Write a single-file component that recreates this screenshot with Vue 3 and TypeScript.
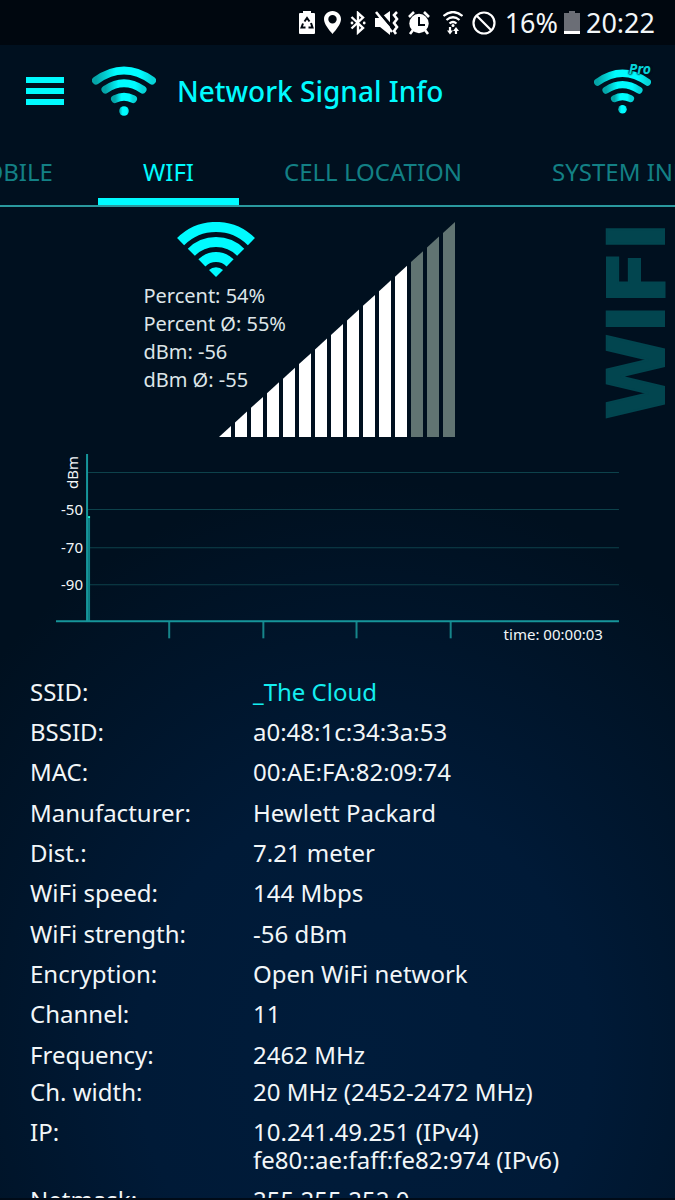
<script setup lang="ts">
import { ref } from 'vue'

interface Detail {
  label: string
  lines: string[]
  accent?: boolean
  tight?: boolean
}

const tabs = ['MOBILE', 'WIFI', 'CELL LOCATION', 'SYSTEM INFO']
const activeTab = ref('WIFI')

const readings = ['Percent: 54%', 'Percent Ø: 55%', 'dBm: -56', 'dBm Ø: -55']

const details: Detail[] = [
  { label: 'SSID:', lines: ['_The Cloud'], accent: true },
  { label: 'BSSID:', lines: ['a0:48:1c:34:3a:53'] },
  { label: 'MAC:', lines: ['00:AE:FA:82:09:74'] },
  { label: 'Manufacturer:', lines: ['Hewlett Packard'] },
  { label: 'Dist.:', lines: ['7.21 meter'] },
  { label: 'WiFi speed:', lines: ['144 Mbps'] },
  { label: 'WiFi strength:', lines: ['-56 dBm'] },
  { label: 'Encryption:', lines: ['Open WiFi network'] },
  { label: 'Channel:', lines: ['11'] },
  { label: 'Frequency:', lines: ['2462 MHz'] },
  { label: 'Ch. width:', lines: ['20 MHz (2452-2472 MHz)'], tight: true },
  { label: 'IP:', lines: ['10.241.49.251 (IPv4)', 'fe80::ae:faff:fe82:974 (IPv6)'] },
  { label: 'Netmask:', lines: ['255.255.252.0'] },
]

// Signal wedge: 12px bars with slanted tops, one every 16px
const barCount = 15
const litBars = 12
const bars = Array.from({ length: barCount }, (_, i) => {
  const left = i * 16
  const right = left + 12
  const slope = 215 / 236
  const base = 215
  return {
    points: `${left},${base} ${left},${base - left * slope} ${right},${base - right * slope} ${right},${base}`,
    lit: i < litBars,
  }
})

const gridLines = [
  { y: 19, label: '' },
  { y: 56, label: '-50' },
  { y: 94, label: '-70' },
  { y: 131, label: '-90' },
]
const ticks = [113, 207, 300, 394]
</script>

<template>
  <div class="screen">
    <div class="status">
      <div class="status-icons">
        <svg width="16" height="24" viewBox="0 0 16 24">
          <path d="M4 0h8v2h3q1 0 1 1v19q0 1-1 1H1q-1 0-1-1V3q0-1 1-1h3z" fill="#fff" />
          <path d="M5.500 10.500L8 7l2.500 3.500M12 12l1.500 4.500H9.500M6.500 16.500h-4L4 12.500" fill="none" stroke="#00070f" stroke-width="2" />
        </svg>
        <svg width="17" height="24" viewBox="0 0 17 24">
          <path fill="#fff" fill-rule="evenodd" d="M8.500 0C3.500 0 0 3.700 0 8.300 0 13 5 19 8.500 23 12 19 17 13 17 8.300 17 3.700 13.500 0 8.500 0zM8.500 4a4.200 4.200 0 1 1 0 8.400 4.200 4.200 0 0 1 0-8.400z" />
        </svg>
        <svg width="16" height="24" viewBox="0 0 16 24">
          <path fill="none" stroke="#fff" stroke-width="2.400" d="M1.500 6l11.500 11-5 4.500V2l5 4.500L1.500 17.500" />
          <circle cx="2" cy="12" r="1.400" fill="#fff" /><circle cx="14.200" cy="12" r="1.400" fill="#fff" />
        </svg>
        <svg width="24" height="24" viewBox="0 0 24 24">
          <path fill="#fff" d="M0 7h5l10-7v24l-10-8H0z" />
          <path d="M3 0l15 17" stroke="#00070f" stroke-width="3" />
          <path d="M1 1l16 20" stroke="#fff" stroke-width="2.600" />
          <path d="M22 1l-3 3 3 4-3 4 3 4-3 4 2 3" fill="none" stroke="#fff" stroke-width="2.600" />
        </svg>
        <svg width="22" height="24" viewBox="0 0 22 24">
          <circle cx="11" cy="12.500" r="9.700" fill="#fff" />
          <path d="M1 6l5-5M21 6l-5-5M5 19l-3 4M17 19l3 4" stroke="#fff" stroke-width="2.600" />
          <path d="M11 6v8h6" fill="none" stroke="#00070f" stroke-width="2" />
        </svg>
        <svg class="apart" width="20" height="24" viewBox="0 0 20 24">
          <g fill="none" stroke="#fff" stroke-width="2.200">
            <path d="M.500 5q9.500-8 19 0M3.500 9q6.500-5.500 13 0M6.500 12.500q3.500-3 7 0" />
            <path d="M7 16v5M13 23v-5" />
          </g>
          <circle cx="10" cy="14.500" r="1.500" fill="#fff" />
          <path fill="#fff" d="M4 19.500h6l-3 4zM10 20h6l-3-4z" />
        </svg>
        <svg width="24" height="24" viewBox="0 0 24 24">
          <circle cx="12" cy="12" r="10.500" fill="none" stroke="#fff" stroke-width="2.200" />
          <path d="M5 5l14 14" stroke="#fff" stroke-width="2.200" />
        </svg>
      </div>
      <span class="status-text">16%</span>
      <svg width="16" height="24" viewBox="0 0 16 24">
        <path d="M5 0h6v2h5v18H0V2h5z" fill="#6b6e76" />
        <path d="M0 20h16v3H0z" fill="#fff" />
      </svg>
      <span class="status-text">20:22</span>
    </div>

    <header class="header">
      <button class="menu" aria-label="Menu"><span></span><span></span><span></span></button>
      <svg width="64" height="50" viewBox="0 0 64 50">
        <defs>
          <linearGradient id="shade" x1="0" y1="0" x2="1" y2="0">
            <stop offset="0" stop-color="#05a5a8" />
            <stop offset=".35" stop-color="#00fbff" />
            <stop offset=".8" stop-color="#00fbff" />
            <stop offset="1" stop-color="#07d4d8" />
          </linearGradient>
        </defs>
        <g fill="none" stroke="url(#shade)" stroke-width="8" stroke-linecap="round">
          <path d="M4 14.500Q32-5.500 60 14.500" />
          <path d="M13.500 23.500Q32 11 50.500 23.500" />
          <path d="M23 33Q32 28.500 41 33" />
        </g>
        <circle cx="32" cy="45" r="4.800" fill="url(#shade)" />
      </svg>
      <h1 class="title">Network Signal Info</h1>
      <button class="pro" aria-label="Pro version">
        <svg width="57" height="45" viewBox="0 0 64 50">
          <g fill="none" stroke="url(#shade)" stroke-width="8" stroke-linecap="round">
            <path d="M4 14.500Q32-5.500 60 14.500" />
            <path d="M13.500 23.500Q32 11 50.500 23.500" />
            <path d="M23 33Q32 28.500 41 33" />
          </g>
          <circle cx="32" cy="45" r="4.800" fill="url(#shade)" />
        </svg>
        <span class="pro-tag">Pro</span>
      </button>
    </header>

    <nav class="tabs">
      <button
        v-for="tab in tabs"
        :key="tab"
        class="tab"
        :class="{ active: tab === activeTab }"
        @click="activeTab = tab"
      >{{ tab }}</button>
    </nav>

    <main>
      <section class="signal">
        <div class="summary">
          <svg class="wifi" width="78" height="56" viewBox="0 0 78 56">
            <g fill="none" stroke="#00fbff" stroke-width="10">
              <path d="M3.600 19.600A50 50 0 0 1 74.400 19.600" />
              <path d="M14.300 30.300A35 35 0 0 1 63.700 30.300" />
              <path d="M24.900 40.900A20 20 0 0 1 53.100 40.900" />
            </g>
            <path d="M32 48A10 10 0 0 1 46 48L39 55z" fill="#00fbff" />
          </svg>
          <p v-for="line in readings" :key="line">{{ line }}</p>
        </div>
        <svg width="236" height="215" viewBox="0 0 236 215">
          <polygon v-for="bar in bars" :key="bar.points" :points="bar.points" :fill="bar.lit ? '#fff' : '#617472'" />
        </svg>
        <div class="side">WIFI</div>
      </section>

      <svg class="chart" viewBox="0 0 562 190">
        <g v-for="line in gridLines" :key="line.y">
          <path :d="`M32 ${line.y}.5H562`" stroke="#0d424b" />
          <text v-if="line.label" x="27" :y="line.y + 6" text-anchor="end">{{ line.label }}</text>
        </g>
        <text transform="translate(22 36) rotate(-90)">dBm</text>
        <path v-for="x in ticks" :key="x" :d="`M${x} 168V185`" stroke="#16858a" stroke-width="2" />
        <path d="M33 168V65" stroke="#0e8288" stroke-width="2" />
        <path d="M31 1V168M0 168H562" stroke="#16959a" stroke-width="2" />
        <path d="M32 64H34" stroke="#1cf0d0" stroke-width="2" />
        <text x="546" y="187" text-anchor="end">time: 00:00:03</text>
      </svg>

      <table class="details">
        <tbody>
          <tr v-for="row in details" :key="row.label" :class="{ tight: row.tight }">
            <th scope="row">{{ row.label }}</th>
            <td :class="{ accent: row.accent }">
              <div v-for="line in row.lines" :key="line">{{ line }}</div>
            </td>
          </tr>
        </tbody>
      </table>
    </main>
  </div>
</template>

<style>
body {
  margin: 0;
  background: #00101f;
}
</style>

<style scoped>
.screen {
  box-sizing: border-box;
  height: 100vh;
  display: flex;
  flex-direction: column;
  overflow: hidden;
  border-bottom: 2px solid #000b18;
  background: radial-gradient(ellipse 75% 48% at 54% 88%, #001c3b 0%, #001a37 45%, #00101f 100%) #00101f;
  color: #f2f6f8;
  font-family: "Noto Sans", "Open Sans", sans-serif;
}
button {
  margin: 0;
  padding: 0;
  border: 0;
  background: none;
  color: inherit;
  font: inherit;
  cursor: pointer;
}
.status {
  flex: none;
  display: flex;
  align-items: center;
  justify-content: flex-end;
  gap: 6px;
  height: 45px;
  padding-right: 20px;
  background: #00070f;
}
.status-icons {
  display: flex;
  gap: 9px;
  margin-right: 3px;
}
.status-icons .apart {
  margin-left: 4px;
}
.status-text {
  font-size: 27px;
  line-height: 36px;
}
.header {
  flex: none;
  display: flex;
  align-items: center;
  height: 92px;
  padding: 0 24px 0 26px;
}
.menu {
  display: flex;
  flex-direction: column;
  gap: 5px;
  width: 38px;
  margin-right: 28px;
}
.menu span {
  height: 6px;
  background: #00fbff;
}
.title {
  flex: 1;
  margin: 0 0 0 21px;
  color: #00fbff;
  font-size: 28px;
  font-weight: 500;
  line-height: 40px;
}
.pro {
  position: relative;
  display: flex;
}
.pro-tag {
  position: absolute;
  top: -8px;
  right: 0;
  color: #08d4d8;
  font-size: 14px;
  font-style: italic;
  font-weight: 700;
  line-height: 16px;
  text-shadow: 0 0 2px #00101f, 0 0 2px #00101f, 0 0 2px #00101f;
}
.tabs {
  flex: none;
  display: flex;
  justify-content: center;
  height: 68px;
  padding-right: 8px;
  border-bottom: 2px solid #2a999e;
}
.tab {
  flex: none;
  padding: 8px 45px 0;
  border-bottom: 7px solid transparent;
  color: #138085;
  font-size: 24px;
  white-space: nowrap;
}
.tab.active {
  border-color: #00fbff;
  color: #00fbff;
}
.signal {
  display: flex;
  align-items: flex-start;
  justify-content: flex-end;
  padding: 15px 6px 0 0;
}
.summary {
  margin-right: -67px;
  color: #dde5e8;
  font-size: 20px;
  line-height: 28px;
}
.summary .wifi {
  display: block;
  margin: 0 0 4px 34px;
}
.summary p {
  margin: 0;
}
.side {
  margin-left: 150px;
  color: #02454f;
  -webkit-text-stroke: 2px #02454f;
  font: 700 78px/64px "DejaVu Sans", sans-serif;
  writing-mode: vertical-rl;
  transform: rotate(180deg);
}
.chart {
  display: block;
  margin: 16px 56px 0;
}
.chart text {
  fill: #f2f6f8;
  font-size: 15px;
}
.chart path {
  fill: none;
}
.details {
  width: 100%;
  margin-top: 29px;
  padding-left: 30px;
  border-collapse: separate;
  border-spacing: 0;
  font-size: 24px;
  line-height: 28px;
}
.details th {
  width: 223px;
  font-weight: 400;
  text-align: left;
}
.details th,
.details td {
  padding: 6px 0;
  vertical-align: top;
}
.details tr:nth-child(3n):nth-child(-n + 9) td {
  padding-bottom: 7px;
}
.details .tight th,
.details .tight td {
  padding: 3px 0 6px;
}
.details .accent {
  color: #14eef0;
}
</style>
